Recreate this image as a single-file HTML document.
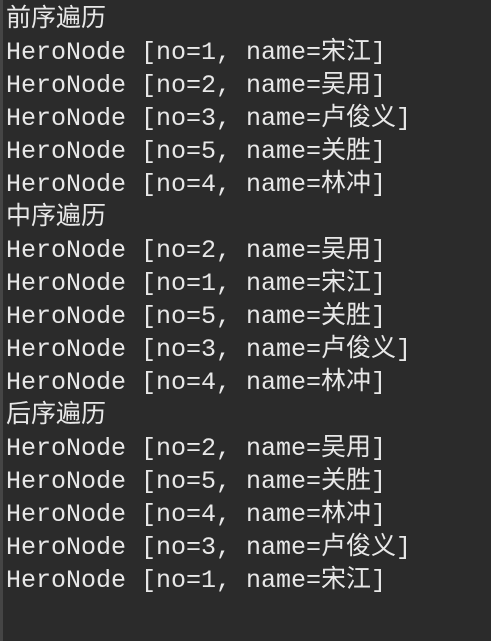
<!DOCTYPE html><html><head><meta charset="utf-8"><style>
html,body{margin:0;padding:0;width:491px;height:641px;overflow:hidden;background:#2b2b2b;}
.strip{position:absolute;left:0;top:0;width:3px;height:641px;background:#454545;}
pre{position:absolute;left:6px;top:3px;margin:0;font-family:"Liberation Mono","Noto Sans CJK SC",monospace;font-size:25px;line-height:33px;color:#e8e8e8;}
</style></head><body><div class="strip"></div><pre>前序遍历
HeroNode [no=1, name=宋江]
HeroNode [no=2, name=吴用]
HeroNode [no=3, name=卢俊义]
HeroNode [no=5, name=关胜]
HeroNode [no=4, name=林冲]
中序遍历
HeroNode [no=2, name=吴用]
HeroNode [no=1, name=宋江]
HeroNode [no=5, name=关胜]
HeroNode [no=3, name=卢俊义]
HeroNode [no=4, name=林冲]
后序遍历
HeroNode [no=2, name=吴用]
HeroNode [no=5, name=关胜]
HeroNode [no=4, name=林冲]
HeroNode [no=3, name=卢俊义]
HeroNode [no=1, name=宋江]</pre></body></html>
